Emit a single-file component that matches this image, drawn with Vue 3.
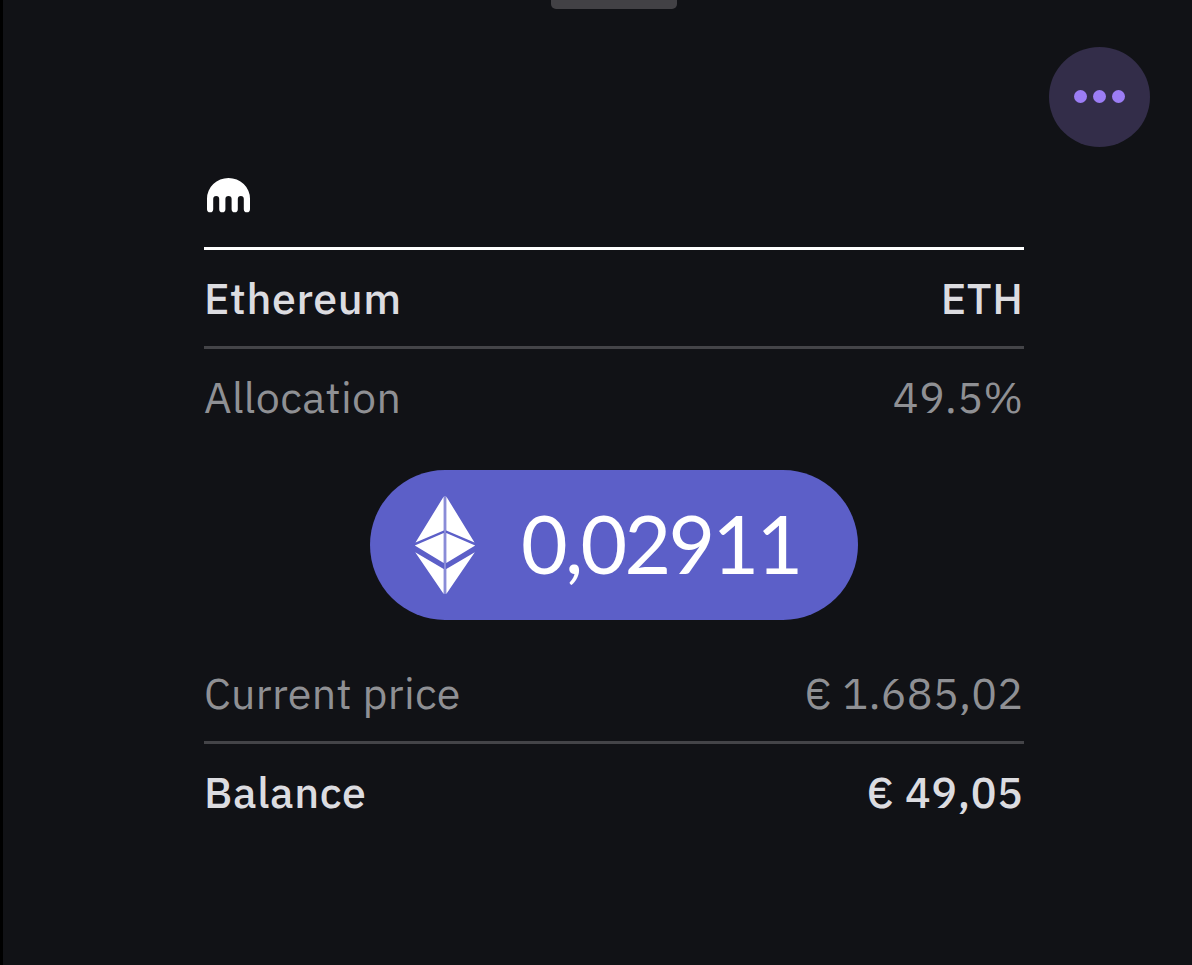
<template>
  <main class="sheet">
    <div class="sheet__handle"></div>

    <header class="sheet__header">
      <button class="sheet__menu" aria-label="Menu">
        <span v-for="n in 3" :key="n" class="sheet__dot"></span>
      </button>
    </header>

    <section class="asset">
      <div class="asset__exchange">
        <svg class="asset__logo" viewBox="0 0 43 35">
          <path
            d="M0 20.500a21.500 20.500 0 0 1 43 0v10.700a3.100 3.100 0 0 1-6.200 0v-10.200a3 3 0 0 0-6 0v10.200a3.100 3.100 0 0 1-6.200 0v-10.200a3.100 3.100 0 0 0-6.200 0v10.200a3.100 3.100 0 0 1-6.200 0v-10.200a3 3 0 0 0-6 0v10.200a3.100 3.100 0 0 1-6.200 0z"
          />
        </svg>
      </div>

      <div class="asset__row asset__row--strong asset__row--top">
        <span>{{ asset.name }}</span>
        <span>{{ asset.symbol }}</span>
      </div>
      <div class="asset__row asset__row--line">
        <span>Allocation</span>
        <span>{{ asset.allocation }}</span>
      </div>

      <div class="asset__pill">
        <svg class="asset__coin" viewBox="0 0 62 100">
          <path class="asset__coin-axis" d="M30.400 1h1.200v98h-1.200z" />
          <path
            d="M29.700 1.500V35.500L1.500 47.500zM32.300 1.500V35.500l28.200 12zM29.700 38v30L.8 50.500zM32.300 38v30l28.900-17.500zM29.700 74V99L1.200 57.200zM32.300 74V99l28.500-41.800z"
          />
        </svg>
        <span class="asset__amount">{{ asset.amount }}</span>
      </div>

      <div class="asset__row">
        <span>Current price</span>
        <span>{{ asset.price }}</span>
      </div>
      <div class="asset__row asset__row--strong asset__row--line">
        <span>Balance</span>
        <span>{{ asset.balance }}</span>
      </div>
    </section>
  </main>
</template>

<script setup>
const asset = {
  name: "Ethereum",
  symbol: "ETH",
  allocation: "49.5%",
  amount: "0,02911",
  price: "€ 1.685,02",
  balance: "€ 49,05",
};
</script>

<style>
body {
  margin: 0;
  background: #111216;
}
</style>

<style scoped>
.sheet {
  box-sizing: border-box;
  height: 965px;
  display: flex;
  flex-direction: column;
  overflow: hidden;
  border-left: 3px solid #000;
  background: #111216;
  color: #8f9094;
  font-family: "IBM Plex Sans", "Noto Sans", sans-serif;
}

.sheet__handle {
  width: 126px;
  height: 9px;
  margin-left: 548px;
  border-radius: 0 0 5px 5px;
  background: #424145;
}

.sheet__header {
  display: flex;
  justify-content: flex-end;
  padding: 38px 42px 0 0;
}

.sheet__menu {
  display: flex;
  align-items: center;
  justify-content: center;
  gap: 6px;
  box-sizing: border-box;
  width: 101px;
  height: 100px;
  padding: 0 0 1px;
  border: none;
  border-radius: 50%;
  background: #332d49;
  cursor: pointer;
}

.sheet__dot {
  width: 13px;
  height: 13px;
  border-radius: 50%;
  background: #9c7df5;
}

.asset {
  width: 820px;
  margin-left: 201px;
}

.asset__exchange {
  height: 69px;
  padding: 31px 0 0 3px;
  box-sizing: border-box;
}

.asset__logo {
  display: block;
  width: 43px;
  height: 35px;
  fill: #fff;
}

.asset__exchange + .asset__row {
  margin-top: 31px;
}

.asset__row {
  display: flex;
  align-items: center;
  justify-content: space-between;
  height: 96px;
  font-size: 43px;
  line-height: 60px;
  letter-spacing: 0.35px;
  white-space: nowrap;
}

.asset__row span:last-child {
  margin-right: 0.5px;
}

.asset__row--top {
  border-top: 3px solid #fff;
}

.asset__row--line {
  border-top: 3px solid #444448;
}

.asset__row--strong {
  color: #dcdce0;
  font-weight: 500;
  letter-spacing: 0.6px;
}

.asset__pill {
  display: flex;
  align-items: center;
  box-sizing: border-box;
  width: 488px;
  height: 150px;
  margin: 25px auto;
  padding-left: 44px;
  border-radius: 75px;
  background: #5c5fc8;
  color: #fff;
}

.asset__coin {
  width: 62px;
  height: 100px;
  fill: #fff;
}

.asset__coin-axis {
  fill: #a9abe2;
}

.asset__amount {
  margin: 0 0 4px 45px;
  font-family: Lato, sans-serif;
  font-size: 80.5px;
  line-height: 100px;
  letter-spacing: -2.7px;
}
</style>
